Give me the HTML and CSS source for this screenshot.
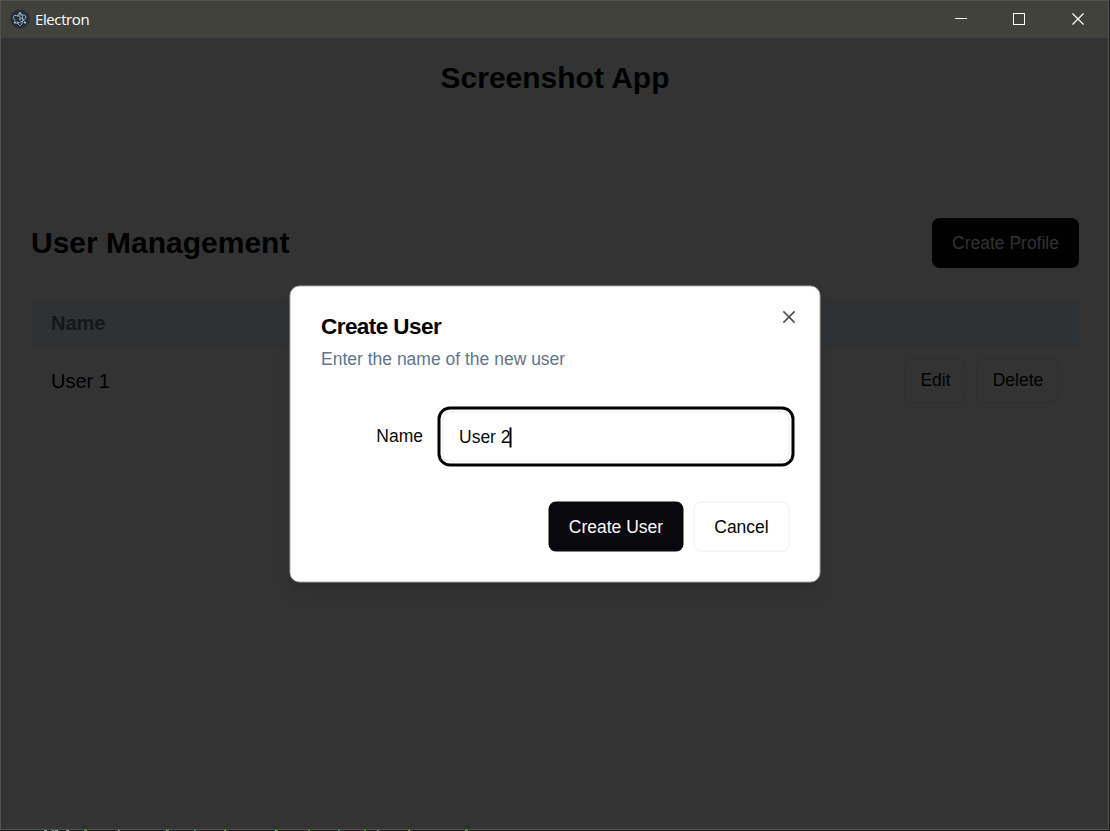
FILE: index.html
```html
<!DOCTYPE html>
<html lang="en">
<head>
<meta charset="utf-8">
<title>Electron</title>
<link rel="stylesheet" href="styles.css">
</head>
<body>
<div class="window">
  <header class="titlebar">
    <svg class="app-icon" width="20" height="20" viewBox="0 0 20 20">
      <circle cx="10" cy="10" r="9.8" fill="#2b2e3a"/>
      <g fill="none" stroke="#8fb3c0" stroke-width="1" stroke-linecap="round">
        <path d="M5 11.600C3.400 9.500 3 7.700 3.900 6.800C4.900 5.900 7.500 6.600 10.200 8.200C11.800 9.100 13.200 10.300 14.200 11.400"/>
        <path d="M7.900 6.200C10.800 5.500 14.800 5.700 15.700 7C16.500 8.200 15 10.300 12.300 12C10.600 13.100 8.500 14 6.500 14.300"/>
        <path d="M7.400 12.800C8.100 15.300 9 16.500 10 16.500C11.500 16.500 12.700 13.800 12.700 10.300C12.700 6.800 11.500 4 10 4C9.100 4 8.300 4.900 7.800 6.500"/>
      </g>
      <g fill="#9fc6d2"><circle cx="10" cy="10.200" r=".9"/><circle cx="5" cy="13.600" r="1.100"/><circle cx="15" cy="13.600" r="1.100"/><circle cx="10" cy="4.200" r=".9"/></g>
    </svg>
    <span class="app-name">Electron</span>
    <svg class="controls" width="130" height="14" viewBox="0 0 130 14" fill="none" stroke="#fff">
      <path d="M0 6.5H12"/>
      <rect x="58.5" y="1.5" width="11" height="11"/>
      <path d="M117.500 1.500L128.500 12.500M128.500 1.500L117.500 12.500" stroke-width="1.200"/>
    </svg>
  </header>
  <main class="page">
    <h1 class="heading app-title">Screenshot App</h1>
    <div class="section-head">
      <h2 class="heading">User Management</h2>
      <button class="btn profile">Create Profile</button>
    </div>
    <div class="table-head">Name</div>
    <div class="table-row">
      <span class="user">User 1</span>
      <button class="btn small edit">Edit</button>
      <button class="btn small delete">Delete</button>
    </div>
  </main>
</div>
<svg class="backdrop" width="1110" height="1" viewBox="0 0 1110 1" shape-rendering="crispEdges">
  <path stroke="#8fa3ad" d="M44 .5h3M52 .5h2M55 .5h3M66 .5h3"/>
  <path stroke="#62a84e" d="M84 .5h3M118 .5h2M166 .5h3M194 .5h2M224 .5h2M275 .5h3M308 .5h2M338 .5h2M364 .5h2M377 .5h2M408 .5h2M465 .5h3"/>
</svg>
<section class="dialog" role="dialog">
  <svg class="close" width="13" height="13" viewBox="0 0 13 13"><path d="M.9.9L12.100 12.100M12.100.9L.9 12.100" fill="none" stroke="#4c4c4e" stroke-width="1.500"/></svg>
  <h3 class="dialog-title">Create User</h3>
  <p class="description">Enter the name of the new user</p>
  <div class="field">
    <label class="label">Name</label>
    <div class="input"><span>User 2</span><i class="caret"></i></div>
  </div>
  <div class="actions">
    <button class="btn primary">Create User</button>
    <button class="btn cancel">Cancel</button>
  </div>
</section>
</body>
</html>
```
FILE: styles.css
```css
* { box-sizing: border-box; }
body {
  margin: 0;
  width: 1110px;
  height: 831px;
  overflow: hidden;
  background: #1c1d22;
  font-family: "Liberation Sans", Arial, sans-serif;
  font-size: 20px;
  color: #000;
}
h1, h2, h3, p { margin: 0; }
.window {
  width: 1109px;
  height: 830px;
  border: 1px solid #52534d;
  background: #333;
}
.titlebar {
  display: flex;
  align-items: center;
  height: 37px;
  padding: 0 23px 2px 9px;
  background: #41423c;
}
.app-name {
  margin-left: 5px;
  color: #fff;
  font: 15px "Open Sans", sans-serif;
  letter-spacing: -.4px;
}
.controls { margin-left: auto; }
.page { padding: 20px 29px 0 30px; }
.heading { font-size: 30px; line-height: 40px; font-weight: 700; }
.app-title { text-align: center; }
.section-head {
  display: flex;
  align-items: center;
  justify-content: space-between;
  margin-top: 120px;
  height: 50px;
}
.btn {
  height: 50px;
  padding: 0;
  border: 0;
  border-radius: 7.5px;
  font: 17.5px "Liberation Sans", Arial, sans-serif;
  color: #020202;
  background: transparent;
}
.profile { width: 147px; background: #010101; color: #323233; }
.table-head {
  height: 50px;
  margin-top: 30px;
  padding-left: 20px;
  line-height: 50px;
  font-weight: 700;
  color: #14171c;
  background: #303132;
}
.table-row {
  display: flex;
  align-items: center;
  gap: 10px;
  height: 65px;
  padding: 0 20px;
}
.user { margin-right: auto; padding-top: 1px; }
.small { height: 45px; padding-left: 1px; border: 1px solid #2e2f30; }
.edit { width: 62px; }
.delete { width: 83px; }
.backdrop { display: block; }
.dialog {
  position: absolute;
  left: 290px;
  top: 286px;
  transform: translate(-.5px, -.5px);
  width: 531px;
  height: 297px;
  padding: 29px 30.5px 30px;
  border: 1px solid #aaa;
  border-radius: 10px;
  background: #fff;
  box-shadow: 0 12px 19px -4px rgba(0,0,0,.1), 0 5px 7px -5px rgba(0,0,0,.1);
}
.close { position: absolute; top: 23.5px; right: 24px; }
.dialog-title {
  font-size: 22.5px;
  line-height: 22.5px;
  font-weight: 700;
  letter-spacing: -.56px;
}
.description {
  margin-top: 8.5px;
  font-size: 17.5px;
  line-height: 25px;
  color: #64748b;
}
.field {
  display: flex;
  align-items: center;
  justify-content: flex-end;
  gap: 19px;
  margin-top: 40px;
  height: 50px;
  font-size: 17.5px;
  color: #09090b;
}
.label { padding-bottom: 2px; }
.input {
  display: flex;
  align-items: center;
  width: 347px;
  height: 50px;
  padding: 1px 15px 0 16px;
  border: 1px solid #e9eff6;
  border-radius: 7.5px;
  outline: 3px solid #000;
  outline-offset: 2px;
}
.caret { width: 2px; height: 20px; margin-left: -1px; background: #000; }
.actions {
  display: flex;
  justify-content: flex-end;
  gap: 10px;
  margin-top: 40px;
}
.actions .btn { padding: 1px 0 0 1px; }
.primary { width: 135px; background: #09090b; color: #f8fafc; }
.cancel { width: 96px; border: 1px solid #e9eff6; }
```
